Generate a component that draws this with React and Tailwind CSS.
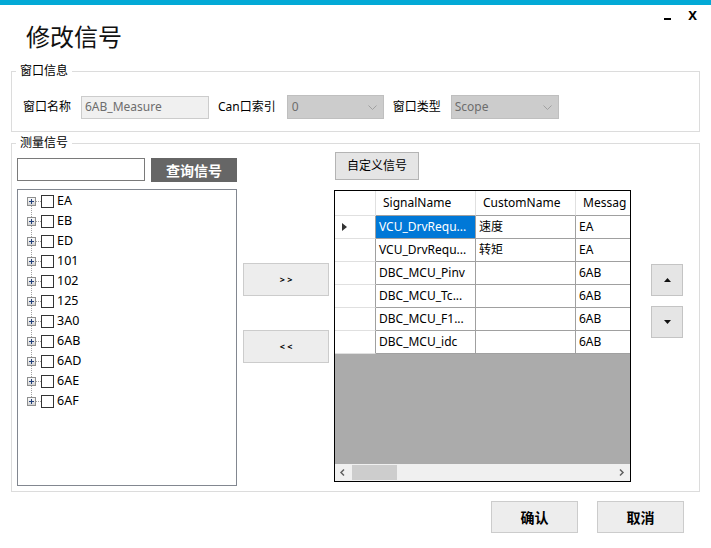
import React from "react";

const FONT = "font-['Noto_Sans','Noto_Sans_CJK_SC',sans-serif]";

function Chevron() {
  return (
    <svg width="9" height="5" viewBox="0 0 9 5" className="shrink-0">
      <path d="M0.5 0.5 L4.5 4.5 L8.5 0.5" fill="none" stroke="#a0a0a0" strokeWidth="1" />
    </svg>
  );
}

function PlusBox() {
  return (
    <svg width="9" height="9" viewBox="0 0 9 9" className="relative shrink-0">
      <defs>
        <linearGradient id="pgrad" x1="0" y1="0" x2="0" y2="1">
          <stop offset="0" stopColor="#ffffff" />
          <stop offset="1" stopColor="#d0d0d0" />
        </linearGradient>
      </defs>
      <rect x="0.5" y="0.5" width="8" height="8" fill="url(#pgrad)" stroke="#8e8f8f" />
      <path d="M2 4.5 H7 M4.5 2 V7" stroke="#22407a" strokeWidth="1" />
    </svg>
  );
}

const treeItems = ["EA", "EB", "ED", "101", "102", "125", "3A0", "6AB", "6AD", "6AE", "6AF"];

const rows = [
  { s: "VCU_DrvRequ...", c: "速度", m: "EA", sel: true },
  { s: "VCU_DrvRequ...", c: "转矩", m: "EA" },
  { s: "DBC_MCU_Pinv", c: "", m: "6AB" },
  { s: "DBC_MCU_Tc...", c: "", m: "6AB" },
  { s: "DBC_MCU_F1...", c: "", m: "6AB" },
  { s: "DBC_MCU_idc", c: "", m: "6AB" },
];

function Legend({ children }) {
  return (
    <span className="absolute left-[4px] -top-[9px] bg-white px-[4px] text-[12px] leading-[16px] text-black">
      {children}
    </span>
  );
}

function GrayButton({ className = "", children }) {
  return (
    <div className={`flex items-center justify-center bg-[#ededed] border border-[#cccccc] ${className}`}>
      {children}
    </div>
  );
}

export default function App() {
  return (
    <div className={`w-[711px] h-[548px] bg-white text-black relative overflow-hidden ${FONT}`}>
      <div className="h-[5px] bg-[#03a9d6]" />
      {/* header */}
      <div className="flex justify-between items-start h-[66px]">
        <div className="pl-[26px] pt-[16px] text-[24px] leading-[32px] text-[#111]">修改信号</div>
        <div className="flex items-start pt-[4px] pr-[14px]">
          <span className="mt-[9px] mr-[17px] w-[7px] h-[2px] bg-black" />
          <span className="text-[13px] font-bold leading-[13px]">X</span>
        </div>
      </div>

      {/* group 1 */}
      <div className="relative mx-[11px] h-[61px] border border-[#dcdcdc]">
        <Legend>窗口信息</Legend>
        <div className="flex items-center pt-[23px] pl-[11px] text-[12px]">
          <span className="w-[48px] whitespace-nowrap">窗口名称</span>
          <div className="ml-[10px] w-[128px] h-[23px] bg-[#f0f0f0] border border-[#cccccc] flex items-center pl-[3px] text-[#6d6d6d]">
            6AB_Measure
          </div>
          <span className="ml-[9px] whitespace-nowrap">Can口索引</span>
          <div className="ml-[11px] w-[97px] h-[24px] bg-[#cccccc] border border-[#bfbfbf] flex items-center justify-between pl-[4px] pr-[6px] text-[#6d6d6d]">
            <span>0</span>
            <Chevron />
          </div>
          <span className="ml-[9px] whitespace-nowrap">窗口类型</span>
          <div className="ml-[10px] w-[108px] h-[24px] bg-[#cccccc] border border-[#bfbfbf] flex items-center justify-between pl-[3px] pr-[6px] text-[#6d6d6d]">
            <span>Scope</span>
            <Chevron />
          </div>
        </div>
      </div>

      {/* group 2 */}
      <div className="relative mx-[11px] mt-[11px] h-[349px] border border-[#dcdcdc]">
        <Legend>测量信号</Legend>
        <div className="flex h-full">
          {/* left column */}
          <div className="ml-[5px] pt-[14px] w-[220px] flex flex-col">
            <div className="flex items-start">
              <div className="w-[128px] h-[23px] border border-[#7a7a7a] bg-white" />
              <div className="ml-[6px] w-[86px] h-[24px] bg-[#666666] text-white font-bold text-[14px] flex items-center justify-center">
                查询信号
              </div>
            </div>
            <div className="mt-[7px] h-[297px] border border-[#828790] bg-white">
              <div className="relative pt-[1px]">
                <div className="absolute left-[13px] top-[11px] h-[200px] border-l border-dotted border-[#a0a0a0]" />
                {treeItems.map((t) => (
                  <div key={t} className="flex items-center h-[20px] pl-[9px]">
                    <PlusBox />
                    <div className="w-[5px] border-t border-dotted border-[#a0a0a0]" />
                    <div className="w-[13px] h-[13px] border border-[#333333] bg-white" />
                    <span className="ml-[3px] text-[12.5px] leading-[16px]">{t}</span>
                  </div>
                ))}
              </div>
            </div>
          </div>

          {/* middle column */}
          <div className="ml-[6px] pt-[119px] w-[86px] flex flex-col">
            <GrayButton className="h-[33px] text-[9px] font-bold">&gt; &gt;</GrayButton>
            <GrayButton className="mt-[34px] h-[33px] text-[9px] font-bold">&lt; &lt;</GrayButton>
          </div>

          {/* right column */}
          <div className="ml-[5px] pt-[8px] w-[297px] flex flex-col">
            <div className="ml-[1px] w-[84px] h-[28px] bg-[#e5e5e5] border border-[#b4b4b4] flex items-center justify-center text-[12px]">
              自定义信号
            </div>
            <div className="mt-[10px] h-[292px] border border-black flex flex-col overflow-hidden bg-white">
              <div className="flex h-[25px] shrink-0 text-[12px]">
                <div className="w-[41px] shrink-0 border-r border-b border-[#e0e0e0]" />
                <div className="w-[100px] shrink-0 border-r border-[#e0e0e0] border-b border-b-[#a0a0a0] flex items-center pl-[7px]">SignalName</div>
                <div className="w-[100px] shrink-0 border-r border-[#e0e0e0] border-b border-b-[#a0a0a0] flex items-center pl-[7px]">CustomName</div>
                <div className="w-[54px] shrink-0 border-b border-[#a0a0a0] flex items-center pl-[7px] whitespace-nowrap overflow-hidden">Messag</div>
              </div>
              {rows.map((r, i) => (
                <div key={i} className="flex h-[23px] shrink-0 text-[12px]">
                  <div className="w-[41px] shrink-0 border-r border-[#a0a0a0] border-b border-b-[#e0e0e0] flex items-center pl-[7px]">
                    {r.sel && (
                      <svg width="5" height="8" viewBox="0 0 5 8">
                        <path d="M0 0 L5 4 L0 8 Z" fill="#333" />
                      </svg>
                    )}
                  </div>
                  <div className="w-[100px] shrink-0 border-r border-b border-[#a0a0a0]">
                    <div className={`h-full flex items-center pl-[3px] whitespace-nowrap overflow-hidden ${r.sel ? "bg-[#0078d7] text-white" : ""}`}>
                      {r.s}
                    </div>
                  </div>
                  <div className="w-[100px] shrink-0 border-r border-b border-[#a0a0a0] flex items-center pl-[3px]">{r.c}</div>
                  <div className="w-[54px] shrink-0 border-b border-[#a0a0a0] flex items-center pl-[3px]">{r.m}</div>
                </div>
              ))}
              <div className="flex-1 bg-[#ababab]" />
              <div className="h-[17px] shrink-0 bg-[#f0f0f0] flex items-center">
                <svg width="17" height="17" viewBox="0 0 17 17" className="shrink-0">
                  <path d="M9 5.5 L6 8.5 L9 11.5" fill="none" stroke="#606060" strokeWidth="1.5" />
                </svg>
                <div className="w-[45px] h-[15px] bg-[#cdcdcd]" />
                <div className="flex-1" />
                <svg width="17" height="17" viewBox="0 0 17 17" className="shrink-0">
                  <path d="M7 5.5 L10 8.5 L7 11.5" fill="none" stroke="#606060" strokeWidth="1.5" />
                </svg>
              </div>
            </div>
          </div>

          {/* up/down column */}
          <div className="ml-[20px] pt-[120px] w-[32px] flex flex-col">
            <div className="h-[32px] bg-[#e5e5e5] border border-[#c4c4c4] flex items-center justify-center">
              <svg width="7" height="4" viewBox="0 0 7 4"><path d="M0 4 L3.5 0 L7 4 Z" fill="#111" /></svg>
            </div>
            <div className="mt-[10px] h-[32px] bg-[#e5e5e5] border border-[#c4c4c4] flex items-center justify-center">
              <svg width="7" height="4" viewBox="0 0 7 4"><path d="M0 0 L3.5 4 L7 0 Z" fill="#111" /></svg>
            </div>
          </div>
        </div>
      </div>

      {/* bottom buttons */}
      <div className="flex justify-end gap-[19px] pr-[27px] mt-[9px]">
        <GrayButton className="w-[87px] h-[32px] text-[14px] font-bold">确认</GrayButton>
        <GrayButton className="w-[87px] h-[32px] text-[14px] font-bold">取消</GrayButton>
      </div>
    </div>
  );
}
